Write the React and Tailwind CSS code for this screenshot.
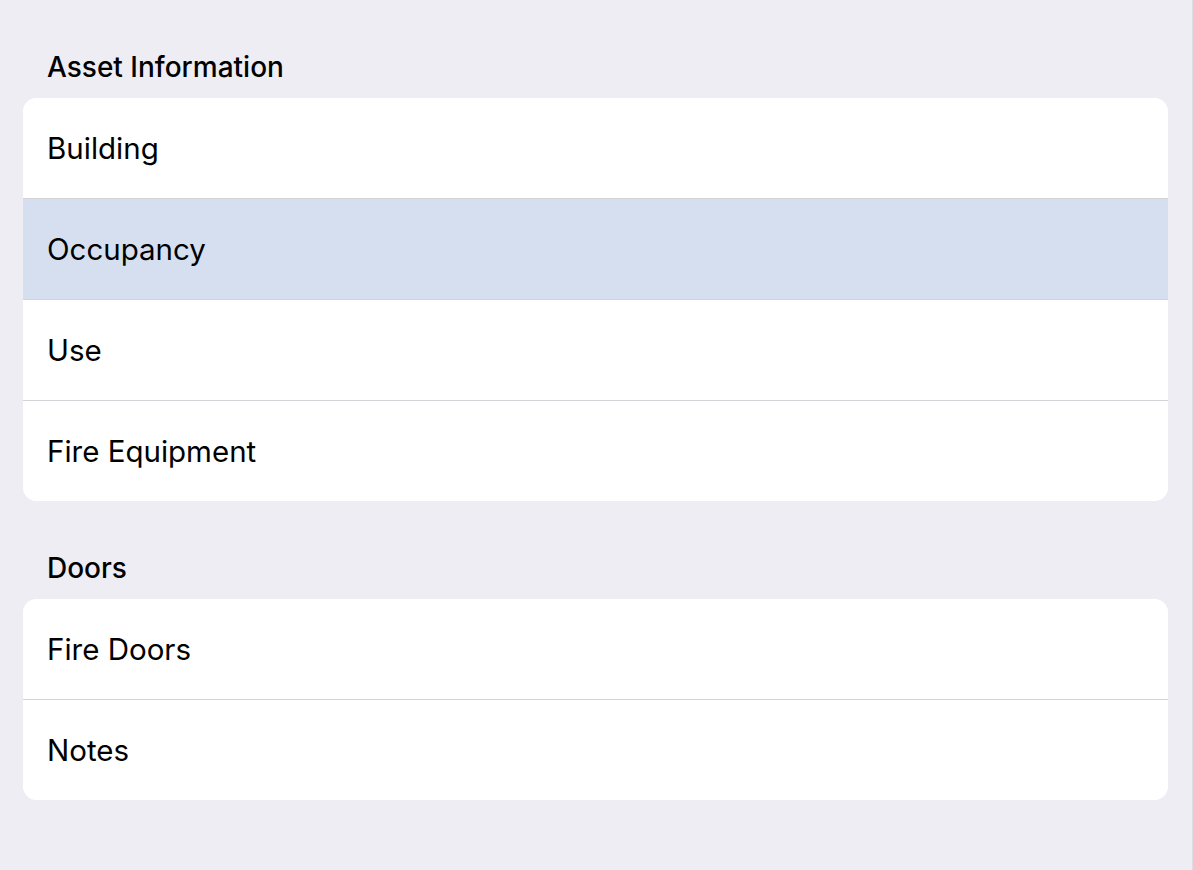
import React from 'react'

const sections = [
  {
    title: 'Asset Information',
    rows: [
      { label: 'Building' },
      { label: 'Occupancy', selected: true },
      { label: 'Use' },
      { label: 'Fire Equipment' },
    ],
  },
  {
    title: 'Doors',
    rows: [{ label: 'Fire Doors' }, { label: 'Notes' }],
  },
]

function Row({ label, selected }) {
  return (
    <div
      className={`box-content h-[100px] flex items-center px-[24px] text-[29.5px] text-black ${
        selected ? 'bg-[#d6dff0]' : 'bg-white'
      }`}
    >
      {label}
    </div>
  )
}

export default function App() {
  return (
    <div
      className="min-h-screen bg-[#eeedf3] border-r border-[#dcdce3] pl-[23px] pr-[24px] pt-[47px] flex flex-col gap-[47px]"
      style={{ fontFamily: 'Inter, "Noto Sans", sans-serif' }}
    >
      {sections.map(section => (
        <section key={section.title}>
          <div className="h-[40px] flex items-center px-[24px] mb-[11px] text-[28px] font-medium text-black">
            {section.title}
          </div>
          <div className="rounded-[14px] overflow-hidden bg-white divide-y divide-[#d4d4d8]">
            {section.rows.map(row => (
              <Row key={row.label} {...row} />
            ))}
          </div>
        </section>
      ))}
    </div>
  )
}
